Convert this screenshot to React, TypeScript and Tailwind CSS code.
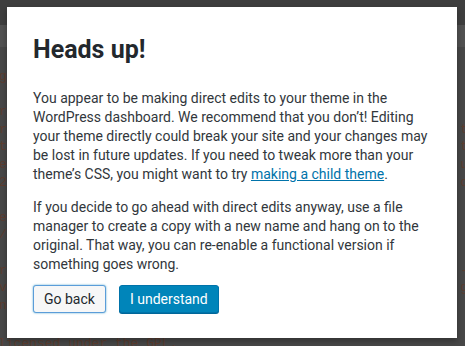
const codeLines: [string, string][] = [
  ["g", ""],
  ["", ""],
  ["r", ""],
  ["r", "t"],
  ["t", "t"],
  ["e", "u"],
  ["2", "o"],
  ["", ""],
  ["e", ""],
  ["/", ""],
  ["", ""],
  ["r", "-"],
  ["v", "g"],
  ["n", ""],
];

export default function App() {
  return (
    <div className="relative w-[465px] h-[346px] overflow-hidden bg-[#474747] font-['Liberation_Mono',monospace] text-[13px] text-[#5d3d2f]">
      <div className="h-[25px] bg-[#3e3e3e]" />
      <div className="h-[22px] bg-[#515151]" />
      <div className="pt-[21px] flex flex-col">
        {codeLines.map(([l, r], i) => (
          <div key={i} className="flex justify-between h-[17.6px] leading-[17.6px]">
            <span className="-ml-[1px]">{l}</span>
            <span className="-mr-[3px]">{r}</span>
          </div>
        ))}
        <div className="h-[18px] leading-[18px] mt-[21px] -ml-[2px]">licensed under the GPL.</div>
      </div>

      <div className="absolute left-[7px] top-[7px] w-[450px] h-[331px] bg-white shadow-[0_3px_6px_rgba(0,0,0,0.3)] pl-[26px] pr-[24px] pt-[27px] font-['Roboto','Helvetica',sans-serif] text-[#23282d]">
        <h1 className="text-[25px] font-bold leading-[32px]">Heads up!</h1>
        <p className="mt-[23px] text-[14px] leading-[19px] text-[#32373c]">
          You appear to be making direct edits to your theme in the WordPress dashboard. We recommend that you don&rsquo;t! Editing your theme directly could break your site and your changes may be lost in future updates. If you need to tweak more than your theme&rsquo;s CSS, you might want to try{" "}
          <a href="#" className="text-[#0073aa] underline">making a child theme</a>.
        </p>
        <p className="mt-[14px] text-[14px] leading-[19px] text-[#32373c]">
          If you decide to go ahead with direct edits anyway, use a file manager to create a copy with a new name and hang on to the original. That way, you can re-enable a functional version if something goes wrong.
        </p>
        <div className="mt-[11px] flex gap-[13px]">
          <button className="h-[28px] px-[10px] rounded-[3px] border border-[#5b9dd9] bg-[#f7f7f7] text-[14px] text-[#23282d] shadow-[0_0_2px_rgba(30,140,190,0.8)]">
            Go back
          </button>
          <button className="h-[28px] px-[10px] rounded-[3px] border border-[#0073aa] bg-[#0085ba] text-[14px] text-white shadow-[0_1px_0_#006799]">
            I understand
          </button>
        </div>
      </div>
    </div>
  );
}
